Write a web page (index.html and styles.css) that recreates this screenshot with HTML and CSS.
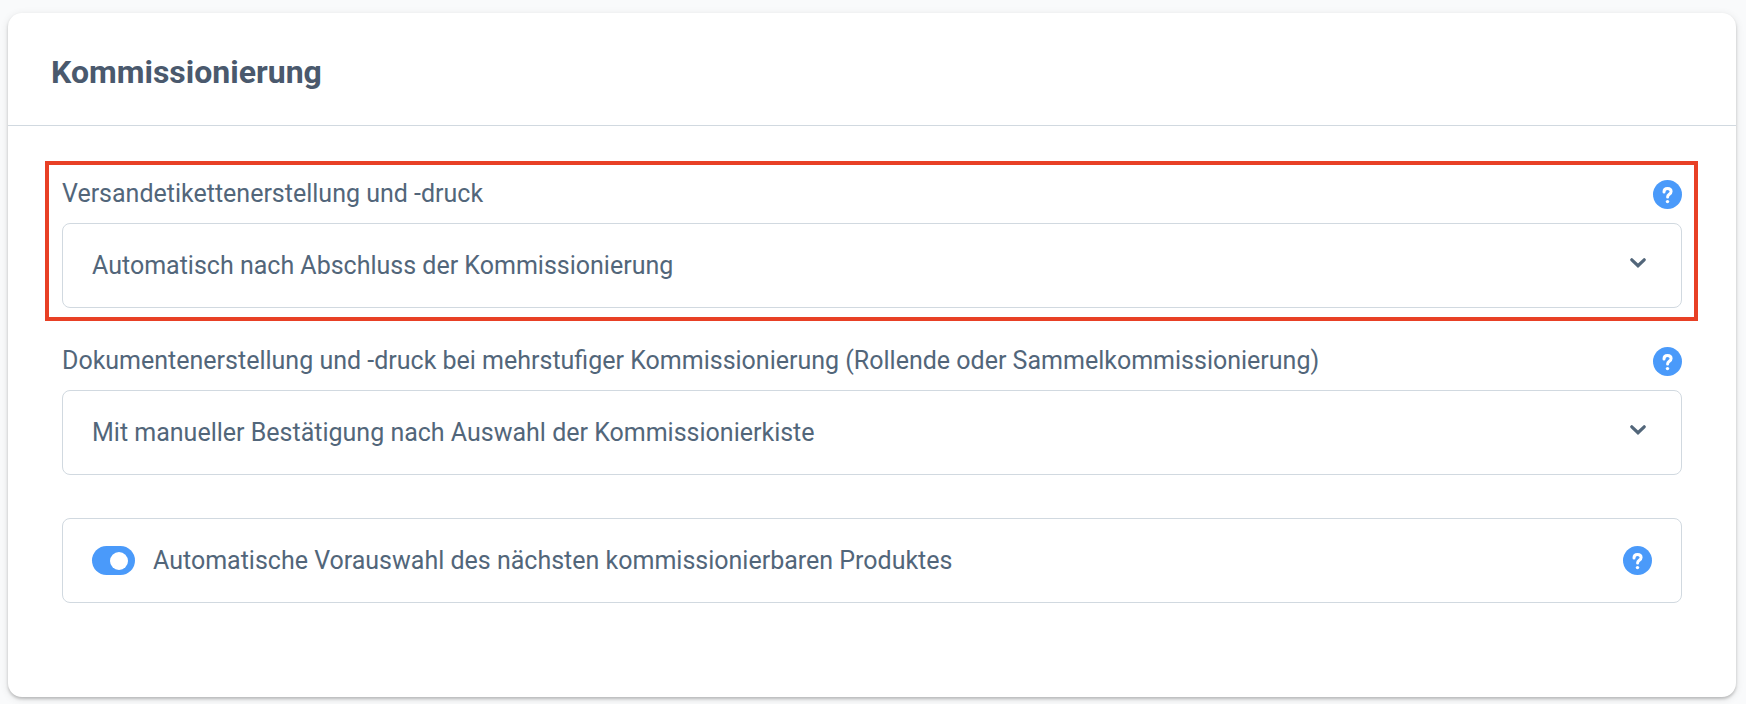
FILE: index.html
```html
<!DOCTYPE html>
<html lang="de">
<head>
    <meta charset="UTF-8">
    <title>Kommissionierung</title>
    <meta name="viewport" content="width=device-width, initial-scale=1.0">
    <link rel="stylesheet" href="styles.css">
</head>
<body>
    <svg class="icon-defs" aria-hidden="true">
        <symbol id="icon-help" viewBox="0 0 29 29">
            <circle cx="14.5" cy="14.5" r="14.5" fill="#4a9afa"/>
            <path d="M11 12c0-2.300 1.600-3.600 3.500-3.600 2.100 0 3.600 1.300 3.600 3.100 0 2.900-3.500 2.700-3.500 5.400" fill="none" stroke="#fff" stroke-width="3" stroke-linecap="round" stroke-linejoin="round"/>
            <circle cx="14.500" cy="21.600" r="1.700" fill="#fff"/>
        </symbol>
        <symbol id="icon-chevron" viewBox="0 0 16 10">
            <path d="M1.800 1.800L8 7.700l6.200-5.900" fill="none" stroke="#52667a" stroke-width="3.200" stroke-linecap="round" stroke-linejoin="miter"/>
        </symbol>
    </svg>

    <main class="card">
        <header class="card-header">
            <h1>Kommissionierung</h1>
        </header>
        <form class="card-body">
            <div class="field highlight">
                <div class="field-head">
                    <label for="label-print">Versandetikettenerstellung und -druck</label>
                    <button type="button" class="help" aria-label="Hilfe"><svg><use href="#icon-help"/></svg></button>
                </div>
                <div class="select-wrap">
                    <select id="label-print">
                        <option>Automatisch nach Abschluss der Kommissionierung</option>
                    </select>
                    <svg class="chevron"><use href="#icon-chevron"/></svg>
                </div>
            </div>

            <div class="field">
                <div class="field-head">
                    <label for="document-print">Dokumentenerstellung und -druck bei mehrstufiger Kommissionierung (Rollende oder Sammelkommissionierung)</label>
                    <button type="button" class="help" aria-label="Hilfe"><svg><use href="#icon-help"/></svg></button>
                </div>
                <div class="select-wrap">
                    <select id="document-print">
                        <option>Mit manueller Bestätigung nach Auswahl der Kommissionierkiste</option>
                    </select>
                    <svg class="chevron"><use href="#icon-chevron"/></svg>
                </div>
            </div>

            <div class="switch-box">
                <input type="checkbox" id="preselect" class="switch" checked>
                <label for="preselect">Automatische Vorauswahl des nächsten kommissionierbaren Produktes</label>
                <button type="button" class="help" aria-label="Hilfe"><svg><use href="#icon-help"/></svg></button>
            </div>
        </form>
    </main>
</body>
</html>
```

FILE: styles.css
```css
* {
    box-sizing: border-box;
}
body {
    margin: 0;
    padding: 13px 10px 7px 8px;
    background: #f9fafb;
    color: #52667a;
    font-family: Roboto, "Liberation Sans", sans-serif;
    font-size: 25px;
}
.icon-defs {
    display: none;
}
.card {
    background: #fff;
    border-radius: 14px;
    box-shadow: 0 2px 3px rgba(0, 0, 0, 0.2), 0 2px 8px rgba(0, 0, 0, 0.1);
}
.card-header {
    padding: 41px 43px 35px;
    border-bottom: 1px solid #d1d9e0;
}
.card-header h1 {
    margin: 0;
    color: #4a596d;
    font-size: 32px;
    font-weight: 700;
    line-height: 36px;
}
.card-body {
    display: flex;
    flex-direction: column;
    gap: 7px;
    padding: 35px 38px 94px 37px;
}
.field {
    display: flex;
    flex-direction: column;
    gap: 9px;
    padding: 9px 12px 9px 13px;
    border: 4px solid transparent;
}
.field.highlight {
    border-color: #e84025;
}
.field-head {
    display: flex;
    align-items: center;
    justify-content: space-between;
    line-height: 40px;
}
.select-wrap {
    position: relative;
}
select {
    display: block;
    width: 100%;
    height: 85px;
    padding: 0 80px 0 29px;
    appearance: none;
    background: #fff;
    border: 1px solid #d1d9e0;
    border-radius: 8px;
    color: inherit;
    font: inherit;
}
.chevron {
    position: absolute;
    top: 35px;
    right: 36px;
    width: 16px;
    height: 10px;
    pointer-events: none;
}
.help {
    flex: none;
    width: 29px;
    height: 29px;
    padding: 0;
    background: none;
    border: none;
    cursor: pointer;
}
.help svg {
    display: block;
    width: 100%;
    height: 100%;
}
.switch-box {
    display: flex;
    align-items: center;
    height: 85px;
    margin: 23px 16px 0 17px;
    padding: 0 29px;
    border: 1px solid #d1d9e0;
    border-radius: 8px;
}
.switch-box label {
    flex: 1;
    padding-left: 18px;
}
.switch {
    display: flex;
    align-items: center;
    justify-content: flex-end;
    width: 43px;
    height: 29px;
    margin: 0;
    padding: 0 7px;
    appearance: none;
    background: #4a9afa;
    border-radius: 15px;
    cursor: pointer;
}
.switch::before {
    content: "";
    width: 18px;
    height: 18px;
    background: #fff;
    border-radius: 50%;
}
.switch:not(:checked) {
    justify-content: flex-start;
    background: #c2ccd6;
}
```
